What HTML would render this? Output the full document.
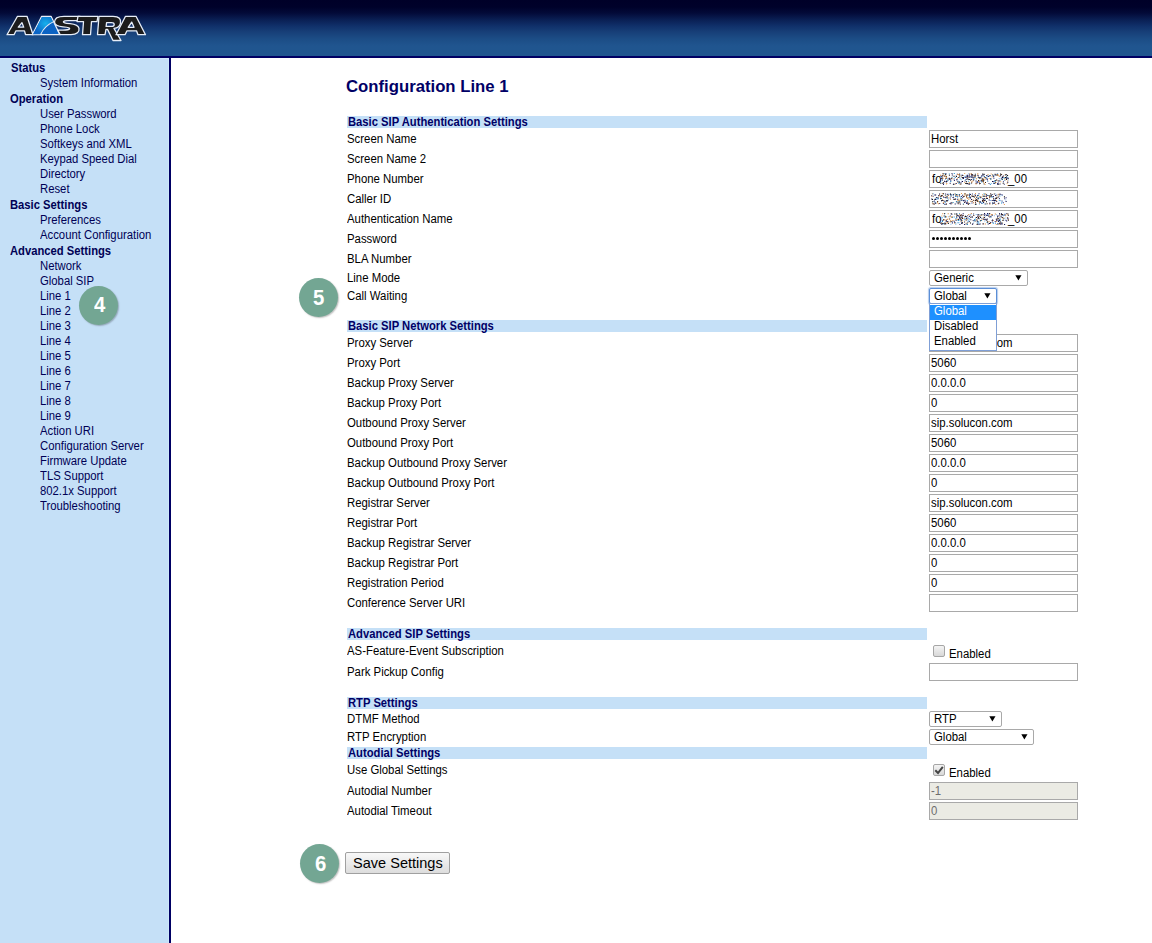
<!DOCTYPE html>
<html><head><meta charset="utf-8"><title>Aastra</title>
<style>
html,body{margin:0;padding:0;width:1152px;height:943px;overflow:hidden;background:#fff;font-family:"Liberation Sans",sans-serif}
.t{position:absolute;white-space:nowrap;transform-origin:0 0}
#hdr{position:absolute;left:0;top:0;width:1152px;height:56px;background:linear-gradient(#000028 0px,#00012a 7px,#030a38 13px,#0a2055 20px,#10306a 26px,#173f78 32px,#1c4d86 39px,#20558f 46px,#20568f 56px)}
#hb{position:absolute;left:0;top:56px;width:1152px;height:2px;background:#000064}
#side{position:absolute;left:0;top:58px;width:169px;height:885px;background:#c5e0f7}
#sl{position:absolute;left:168px;top:58px;width:1px;height:885px;background:#cde8fa}
#st{position:absolute;left:0;top:58px;width:169px;height:1px;background:#cde8fa}
#sb{position:absolute;left:169px;top:56px;width:2px;height:887px;background:#000064}
</style></head><body>
<div id="hdr"></div><div id="hb"></div><div id="side"></div><div id="sl"></div><div id="st"></div><div id="sb"></div>
<svg style="position:absolute;left:0;top:0" width="160" height="56" viewBox="0 0 160 56">
<defs><radialGradient id="bl" cx="0.62" cy="0.38" r="0.6"><stop offset="0" stop-color="#16b0ec"/><stop offset="1" stop-color="#0a64c6"/></radialGradient></defs>
<g transform="translate(0,16.3) scale(1,0.968) translate(0,-16)"><g stroke="#e8eef8" stroke-width="1.3" stroke-linejoin="round" fill="#1c1c1c">
<path d="M7 35L17.5 16H27L33 35H25.5L24.5 31H16L14 35Z M18.3 27.3H23.7L22 22.5Z" fill-rule="evenodd"/>
<path d="M32.3 35L41.7 16H51L59.9 35Z" fill="#0b63c4"/>
<path d="M80 16H64C57 16 54.5 19 54.5 22C54.5 25 58 26.5 63 27C69 27.5 70 28 69.5 29C69 30 67 30.2 63 30.2H57.8L60.2 35H71C77 35 79.5 32 79 28.5C78.5 25.5 75.5 24 70 23.5C65 23 63 22.5 63.5 21.5C64 20.5 66 20.4 68 20.4H79Z"/>
<path d="M78 16H98L97 21.5H91.5L90.5 35H82.5L83.5 21.5H77Z"/>
<path d="M99 16H113C119.5 16 121 19 120.5 23C120 26 117.5 28 114 28.5L121 41H113L107.5 29.5H106L105 35H97.5Z M106.6 22.5L106.1 26.5H111.5C113.5 26.5 114.2 25.3 114.2 24.4C114.2 23.2 113.2 22.5 111.5 22.5Z" fill-rule="evenodd"/>
<path d="M116 35L125.5 16H136L145.5 35H138L136.5 31H127L125 35Z M128.2 27.4H134L131.7 22Z" fill-rule="evenodd"/>
</g>
<path d="M33 34.6L41.9 16.6H50.6L53.3 22.2C47.5 24.5 43 29 40.5 34.6Z" fill="url(#bl)"/><path d="M40.5 35C43 29 47.5 24.5 53.6 21.5" stroke="#e0e8f4" stroke-width="1.1" fill="none"/></g>
</svg>
<div class="t" style="left:10.6px;top:61px;font-size:12px;line-height:14px;font-weight:bold;color:#000055;transform:scaleX(0.936);">Status</div>
<div class="t" style="left:39.9px;top:76px;font-size:12px;line-height:14px;font-weight:normal;color:#000055;transform:scaleX(0.942);">System Information</div>
<div class="t" style="left:9.6px;top:92px;font-size:12px;line-height:14px;font-weight:bold;color:#000055;transform:scaleX(0.936);">Operation</div>
<div class="t" style="left:39.9px;top:107px;font-size:12px;line-height:14px;font-weight:normal;color:#000055;transform:scaleX(0.942);">User Password</div>
<div class="t" style="left:39.9px;top:122px;font-size:12px;line-height:14px;font-weight:normal;color:#000055;transform:scaleX(0.942);">Phone Lock</div>
<div class="t" style="left:39.9px;top:137px;font-size:12px;line-height:14px;font-weight:normal;color:#000055;transform:scaleX(0.942);">Softkeys and XML</div>
<div class="t" style="left:39.9px;top:152px;font-size:12px;line-height:14px;font-weight:normal;color:#000055;transform:scaleX(0.942);">Keypad Speed Dial</div>
<div class="t" style="left:39.9px;top:167px;font-size:12px;line-height:14px;font-weight:normal;color:#000055;transform:scaleX(0.942);">Directory</div>
<div class="t" style="left:39.9px;top:182px;font-size:12px;line-height:14px;font-weight:normal;color:#000055;transform:scaleX(0.942);">Reset</div>
<div class="t" style="left:10.1px;top:198px;font-size:12px;line-height:14px;font-weight:bold;color:#000055;transform:scaleX(0.936);">Basic Settings</div>
<div class="t" style="left:39.9px;top:213px;font-size:12px;line-height:14px;font-weight:normal;color:#000055;transform:scaleX(0.942);">Preferences</div>
<div class="t" style="left:39.9px;top:228px;font-size:12px;line-height:14px;font-weight:normal;color:#000055;transform:scaleX(0.942);">Account Configuration</div>
<div class="t" style="left:9.6px;top:244px;font-size:12px;line-height:14px;font-weight:bold;color:#000055;transform:scaleX(0.936);">Advanced Settings</div>
<div class="t" style="left:39.9px;top:259px;font-size:12px;line-height:14px;font-weight:normal;color:#000055;transform:scaleX(0.942);">Network</div>
<div class="t" style="left:39.9px;top:274px;font-size:12px;line-height:14px;font-weight:normal;color:#000055;transform:scaleX(0.942);">Global SIP</div>
<div class="t" style="left:39.9px;top:289px;font-size:12px;line-height:14px;font-weight:normal;color:#000055;transform:scaleX(0.942);">Line 1</div>
<div class="t" style="left:39.9px;top:304px;font-size:12px;line-height:14px;font-weight:normal;color:#000055;transform:scaleX(0.942);">Line 2</div>
<div class="t" style="left:39.9px;top:319px;font-size:12px;line-height:14px;font-weight:normal;color:#000055;transform:scaleX(0.942);">Line 3</div>
<div class="t" style="left:39.9px;top:334px;font-size:12px;line-height:14px;font-weight:normal;color:#000055;transform:scaleX(0.942);">Line 4</div>
<div class="t" style="left:39.9px;top:349px;font-size:12px;line-height:14px;font-weight:normal;color:#000055;transform:scaleX(0.942);">Line 5</div>
<div class="t" style="left:39.9px;top:364px;font-size:12px;line-height:14px;font-weight:normal;color:#000055;transform:scaleX(0.942);">Line 6</div>
<div class="t" style="left:39.9px;top:379px;font-size:12px;line-height:14px;font-weight:normal;color:#000055;transform:scaleX(0.942);">Line 7</div>
<div class="t" style="left:39.9px;top:394px;font-size:12px;line-height:14px;font-weight:normal;color:#000055;transform:scaleX(0.942);">Line 8</div>
<div class="t" style="left:39.9px;top:409px;font-size:12px;line-height:14px;font-weight:normal;color:#000055;transform:scaleX(0.942);">Line 9</div>
<div class="t" style="left:39.9px;top:424px;font-size:12px;line-height:14px;font-weight:normal;color:#000055;transform:scaleX(0.942);">Action URI</div>
<div class="t" style="left:39.9px;top:439px;font-size:12px;line-height:14px;font-weight:normal;color:#000055;transform:scaleX(0.942);">Configuration Server</div>
<div class="t" style="left:39.9px;top:454px;font-size:12px;line-height:14px;font-weight:normal;color:#000055;transform:scaleX(0.942);">Firmware Update</div>
<div class="t" style="left:39.9px;top:469px;font-size:12px;line-height:14px;font-weight:normal;color:#000055;transform:scaleX(0.942);">TLS Support</div>
<div class="t" style="left:39.9px;top:484px;font-size:12px;line-height:14px;font-weight:normal;color:#000055;transform:scaleX(0.942);">802.1x Support</div>
<div class="t" style="left:39.9px;top:499px;font-size:12px;line-height:14px;font-weight:normal;color:#000055;transform:scaleX(0.942);">Troubleshooting</div>
<div class="t" style="left:346px;top:78px;font-size:16px;line-height:18px;font-weight:bold;color:#000066;transform:scaleX(1.045);">Configuration Line 1</div>
<div style="position:absolute;left:347px;top:116px;width:580px;height:12px;background:#c5e0f7"></div>
<div class="t" style="left:348px;top:115px;font-size:12px;line-height:14px;font-weight:bold;color:#000066;transform:scaleX(0.936);">Basic SIP Authentication Settings</div>
<div class="t" style="left:346.8px;top:132px;font-size:12px;line-height:14px;font-weight:normal;color:#000;transform:scaleX(0.948);">Screen Name</div>
<div style="position:absolute;left:929px;top:130px;width:147px;height:16px;border:1px solid #a9a9a9;background:#fff"></div>
<div class="t" style="left:931px;top:132px;font-size:12px;line-height:14px;font-weight:normal;color:#000;transform:scaleX(0.948);">Horst</div>
<div class="t" style="left:346.8px;top:152px;font-size:12px;line-height:14px;font-weight:normal;color:#000;transform:scaleX(0.948);">Screen Name 2</div>
<div style="position:absolute;left:929px;top:150px;width:147px;height:16px;border:1px solid #a9a9a9;background:#fff"></div>
<div class="t" style="left:346.8px;top:172px;font-size:12px;line-height:14px;font-weight:normal;color:#000;transform:scaleX(0.948);">Phone Number</div>
<div style="position:absolute;left:929px;top:170px;width:147px;height:16px;border:1px solid #a9a9a9;background:#fff"></div>
<div class="t" style="left:346.8px;top:192px;font-size:12px;line-height:14px;font-weight:normal;color:#000;transform:scaleX(0.948);">Caller ID</div>
<div style="position:absolute;left:929px;top:190px;width:147px;height:16px;border:1px solid #a9a9a9;background:#fff"></div>
<div class="t" style="left:346.8px;top:212px;font-size:12px;line-height:14px;font-weight:normal;color:#000;transform:scaleX(0.948);">Authentication Name</div>
<div style="position:absolute;left:929px;top:210px;width:147px;height:16px;border:1px solid #a9a9a9;background:#fff"></div>
<div class="t" style="left:346.8px;top:232px;font-size:12px;line-height:14px;font-weight:normal;color:#000;transform:scaleX(0.948);">Password</div>
<div style="position:absolute;left:929px;top:230px;width:147px;height:16px;border:1px solid #a9a9a9;background:#fff"></div>
<div class="t" style="left:346.8px;top:252px;font-size:12px;line-height:14px;font-weight:normal;color:#000;transform:scaleX(0.948);">BLA Number</div>
<div style="position:absolute;left:929px;top:250px;width:147px;height:16px;border:1px solid #a9a9a9;background:#fff"></div>
<div class="t" style="left:931.5px;top:172px;font-size:12px;line-height:14px;font-weight:normal;color:#000;transform:scaleX(0.948);">fo</div>
<svg style="position:absolute;left:940px;top:173px" width="69" height="12"><path fill="#1a1a6a" d="M22.0 1.7h1v1h-1zM16.4 6.1h1v1h-1zM42.9 6.4h1v1h-1zM6.6 7.8h1v1h-1zM10.3 5.4h1v1h-1zM10.3 7.2h1v1h-1zM47.0 5.7h1v1h-1zM24.6 7.6h1v1h-1zM13.6 5.4h1v1h-1zM13.9 6.9h1v1h-1zM37.0 9.2h1v1h-1zM21.7 7.9h1v1h-1zM23.0 5.0h1v1h-1zM28.9 0.8h1v1h-1zM27.5 3.8h1v1h-1zM40.7 7.6h1v1h-1zM38.7 8.9h1v1h-1zM46.3 5.4h1v1h-1zM61.9 3.2h1v1h-1zM62.9 8.3h1v1h-1zM53.4 4.7h1v1h-1zM37.3 7.9h1v1h-1zM43.8 3.1h1v1h-1zM25.6 3.7h1v1h-1zM57.7 9.6h1v1h-1zM5.8 8.5h1v1h-1zM53.2 2.6h1v1h-1zM26.4 2.5h1v1h-1zM62.9 2.5h1v1h-1zM61.0 5.3h1v1h-1zM24.7 3.7h1v1h-1zM9.0 5.5h1v1h-1zM16.8 0.7h1v1h-1zM57.2 10.1h1v1h-1zM59.6 2.6h1v1h-1zM30.5 2.9h1v1h-1zM3.0 11.0h1v1h-1zM45.4 4.6h1v1h-1zM20.5 9.2h1v1h-1z"/><path fill="#d08030" d="M2.5 4.8h1v1h-1zM38.1 7.5h1v1h-1zM19.6 10.8h1v1h-1zM39.4 5.0h1v1h-1zM64.2 5.2h1v1h-1zM26.7 4.4h1v1h-1zM7.5 6.6h1v1h-1zM0.0 1.7h1v1h-1zM64.5 6.8h1v1h-1zM51.6 3.3h1v1h-1zM32.6 7.2h1v1h-1zM31.5 8.2h1v1h-1zM37.3 0.2h1v1h-1zM11.7 5.2h1v1h-1zM36.1 5.3h1v1h-1zM30.7 0.3h1v1h-1zM57.1 1.5h1v1h-1zM38.8 7.7h1v1h-1zM43.1 8.8h1v1h-1zM16.9 8.5h1v1h-1zM42.0 7.1h1v1h-1zM4.1 3.0h1v1h-1zM28.3 4.1h1v1h-1zM6.2 3.8h1v1h-1zM65.8 5.4h1v1h-1zM47.5 1.2h1v1h-1zM5.5 4.6h1v1h-1zM2.8 0.4h1v1h-1zM62.8 3.3h1v1h-1zM31.3 8.6h1v1h-1zM66.7 9.7h1v1h-1zM18.0 0.9h1v1h-1zM57.6 7.3h1v1h-1zM34.5 2.5h1v1h-1zM44.4 10.9h1v1h-1zM37.3 0.7h1v1h-1zM43.6 10.0h1v1h-1zM35.4 10.2h1v1h-1z"/><path fill="#2090d0" d="M24.6 2.7h1v1h-1zM1.5 5.1h1v1h-1zM65.1 1.7h1v1h-1zM25.1 6.2h1v1h-1zM4.6 2.3h1v1h-1zM59.5 6.8h1v1h-1zM50.3 5.3h1v1h-1zM49.3 1.9h1v1h-1zM1.3 4.8h1v1h-1zM41.4 8.5h1v1h-1zM53.3 9.9h1v1h-1zM18.5 10.0h1v1h-1zM19.0 8.8h1v1h-1zM19.7 5.5h1v1h-1zM66.8 3.8h1v1h-1zM10.2 8.0h1v1h-1zM46.3 4.5h1v1h-1zM63.5 4.5h1v1h-1zM62.0 6.1h1v1h-1zM37.9 4.3h1v1h-1zM53.3 2.5h1v1h-1zM43.9 3.3h1v1h-1zM7.4 6.9h1v1h-1zM3.7 0.3h1v1h-1zM28.2 7.8h1v1h-1zM49.8 11.0h1v1h-1zM54.6 8.1h1v1h-1zM34.8 4.3h1v1h-1zM32.8 6.0h1v1h-1zM63.3 4.1h1v1h-1zM14.8 4.1h1v1h-1zM54.1 7.3h1v1h-1zM43.5 1.0h1v1h-1zM13.8 0.1h1v1h-1zM39.3 4.0h1v1h-1zM8.8 0.6h1v1h-1zM11.7 3.8h1v1h-1z"/><path fill="#000" d="M39.6 10.0h1v1h-1zM56.2 1.4h1v1h-1zM39.2 4.4h1v1h-1zM41.5 5.4h1v1h-1zM52.2 1.4h1v1h-1zM32.7 4.4h1v1h-1zM61.8 3.9h1v1h-1zM43.3 6.7h1v1h-1zM54.8 9.0h1v1h-1zM64.9 4.0h1v1h-1zM67.1 2.1h1v1h-1zM60.1 0.6h1v1h-1zM62.7 9.8h1v1h-1zM26.7 3.5h1v1h-1zM60.2 1.8h1v1h-1zM34.8 0.7h1v1h-1zM42.3 0.5h1v1h-1zM42.7 5.8h1v1h-1zM66.0 3.4h1v1h-1zM66.1 6.0h1v1h-1zM2.3 9.7h1v1h-1zM5.7 3.1h1v1h-1zM56.2 6.4h1v1h-1zM55.0 9.3h1v1h-1zM26.3 10.1h1v1h-1zM57.1 1.3h1v1h-1zM61.6 5.5h1v1h-1zM29.1 6.0h1v1h-1zM21.7 4.1h1v1h-1zM26.0 8.2h1v1h-1zM8.6 5.5h1v1h-1zM58.2 10.7h1v1h-1zM20.4 10.4h1v1h-1zM18.9 3.5h1v1h-1zM32.3 2.6h1v1h-1zM50.3 5.6h1v1h-1zM33.7 2.2h1v1h-1zM6.0 7.8h1v1h-1zM25.3 10.1h1v1h-1zM54.6 0.7h1v1h-1zM13.5 2.7h1v1h-1zM16.0 3.1h1v1h-1zM22.2 4.4h1v1h-1zM0.3 9.7h1v1h-1zM12.9 10.7h1v1h-1zM40.8 7.2h1v1h-1zM26.1 8.3h1v1h-1z"/><path fill="#303060" d="M3.2 9.4h1v1h-1zM28.5 5.9h1v1h-1zM47.5 2.7h1v1h-1zM33.0 6.5h1v1h-1zM16.4 6.5h1v1h-1zM41.2 2.2h1v1h-1zM59.6 10.4h1v1h-1zM29.1 2.3h1v1h-1zM26.1 5.7h1v1h-1zM66.1 1.2h1v1h-1zM57.8 7.4h1v1h-1zM41.4 2.4h1v1h-1zM67.6 4.6h1v1h-1zM63.8 10.7h1v1h-1zM3.4 2.2h1v1h-1zM18.4 8.8h1v1h-1zM56.9 0.2h1v1h-1zM59.2 7.4h1v1h-1zM39.9 4.3h1v1h-1zM4.5 8.1h1v1h-1zM40.8 3.6h1v1h-1zM47.1 7.4h1v1h-1zM65.8 4.9h1v1h-1zM48.5 9.9h1v1h-1zM19.1 0.6h1v1h-1zM43.2 1.6h1v1h-1zM32.1 3.8h1v1h-1zM17.4 8.1h1v1h-1zM27.2 4.9h1v1h-1zM2.0 4.5h1v1h-1zM46.4 2.2h1v1h-1zM15.7 2.4h1v1h-1zM11.5 0.0h1v1h-1zM53.0 3.2h1v1h-1zM38.5 4.1h1v1h-1zM46.1 2.0h1v1h-1zM27.0 3.0h1v1h-1z"/><path fill="#80b8e8" d="M4.9 5.9h1v1h-1zM39.5 7.0h1v1h-1zM34.8 1.8h1v1h-1zM39.0 9.6h1v1h-1zM19.4 4.2h1v1h-1zM43.1 10.5h1v1h-1zM21.2 1.6h1v1h-1zM47.3 2.9h1v1h-1zM36.2 8.6h1v1h-1zM17.6 7.6h1v1h-1zM30.4 10.3h1v1h-1zM6.9 5.2h1v1h-1zM60.5 4.8h1v1h-1zM63.9 7.1h1v1h-1zM27.5 4.6h1v1h-1zM58.7 5.0h1v1h-1zM0.2 4.0h1v1h-1zM5.8 0.5h1v1h-1zM19.0 1.2h1v1h-1zM57.1 0.0h1v1h-1zM67.9 6.5h1v1h-1zM29.7 3.5h1v1h-1zM33.9 6.3h1v1h-1zM47.3 7.9h1v1h-1zM26.7 9.9h1v1h-1zM50.8 9.9h1v1h-1zM17.8 7.9h1v1h-1zM41.3 3.6h1v1h-1zM7.2 6.6h1v1h-1zM21.2 6.2h1v1h-1zM28.2 0.2h1v1h-1z"/><path fill="#e8a050" d="M18.9 1.5h1v1h-1zM58.8 3.1h1v1h-1zM67.1 7.5h1v1h-1zM56.8 1.3h1v1h-1zM5.9 10.4h1v1h-1zM35.8 10.3h1v1h-1zM14.9 10.5h1v1h-1zM18.4 1.4h1v1h-1zM16.7 4.9h1v1h-1zM44.6 6.0h1v1h-1zM29.3 0.6h1v1h-1zM24.2 0.0h1v1h-1zM18.0 1.0h1v1h-1zM58.0 1.7h1v1h-1zM17.2 0.7h1v1h-1zM60.3 8.2h1v1h-1zM6.3 9.9h1v1h-1zM42.6 5.8h1v1h-1zM3.8 2.1h1v1h-1zM5.5 2.5h1v1h-1zM64.5 1.6h1v1h-1zM50.7 0.4h1v1h-1zM38.2 8.3h1v1h-1zM24.3 9.0h1v1h-1zM2.1 4.5h1v1h-1zM48.7 5.1h1v1h-1zM55.4 9.0h1v1h-1zM43.8 4.3h1v1h-1zM28.8 9.0h1v1h-1z"/><path fill="#000040" d="M29.1 3.5h1v1h-1zM35.7 9.6h1v1h-1zM23.1 3.9h1v1h-1zM4.1 7.7h1v1h-1zM27.1 10.1h1v1h-1zM32.2 1.3h1v1h-1zM67.5 5.1h1v1h-1zM67.3 8.7h1v1h-1zM53.2 8.3h1v1h-1zM1.9 6.5h1v1h-1zM54.8 1.6h1v1h-1zM61.9 3.9h1v1h-1zM30.8 5.9h1v1h-1zM9.7 9.7h1v1h-1zM37.5 2.1h1v1h-1zM31.2 1.7h1v1h-1zM52.0 7.9h1v1h-1zM65.2 4.1h1v1h-1zM49.6 2.3h1v1h-1zM33.6 4.2h1v1h-1zM42.2 1.5h1v1h-1zM48.2 3.1h1v1h-1zM13.5 10.8h1v1h-1zM15.7 9.9h1v1h-1zM26.8 1.7h1v1h-1zM27.6 2.6h1v1h-1zM30.8 3.7h1v1h-1zM8.7 4.7h1v1h-1zM35.5 7.5h1v1h-1zM0.7 3.3h1v1h-1zM57.1 10.8h1v1h-1zM22.0 8.1h1v1h-1zM1.6 2.6h1v1h-1zM53.7 10.0h1v1h-1zM28.6 10.9h1v1h-1zM11.8 1.5h1v1h-1zM5.3 0.3h1v1h-1z"/><path fill="#402010" d="M42.1 5.5h1v1h-1zM65.4 0.9h1v1h-1zM5.5 4.9h1v1h-1zM19.2 1.6h1v1h-1zM31.1 9.6h1v1h-1zM35.1 2.3h1v1h-1zM44.7 3.9h1v1h-1zM1.9 2.3h1v1h-1zM45.0 9.0h1v1h-1zM28.6 10.1h1v1h-1zM8.9 1.7h1v1h-1zM37.8 3.6h1v1h-1zM18.8 8.5h1v1h-1zM30.1 6.7h1v1h-1zM34.5 2.7h1v1h-1zM11.0 4.7h1v1h-1zM27.6 5.9h1v1h-1zM2.5 0.2h1v1h-1zM20.7 2.6h1v1h-1zM3.0 9.2h1v1h-1zM42.7 8.1h1v1h-1zM9.5 5.8h1v1h-1zM38.0 6.9h1v1h-1zM31.1 0.8h1v1h-1zM61.1 1.0h1v1h-1zM31.7 1.3h1v1h-1zM1.2 5.0h1v1h-1zM5.1 1.0h1v1h-1zM17.8 4.0h1v1h-1zM55.2 6.9h1v1h-1zM43.7 0.8h1v1h-1zM26.6 10.2h1v1h-1zM22.4 2.0h1v1h-1zM42.2 7.4h1v1h-1zM39.0 10.2h1v1h-1z"/></svg>
<div class="t" style="left:1008px;top:172px;font-size:12px;line-height:14px;font-weight:normal;color:#000;transform:scaleX(0.948);">_00</div>
<svg style="position:absolute;left:931px;top:193px" width="76" height="12"><path fill="#1a1a6a" d="M73.2 5.3h1v1h-1zM3.1 6.2h1v1h-1zM37.8 2.0h1v1h-1zM49.0 8.6h1v1h-1zM13.3 8.2h1v1h-1zM31.3 4.0h1v1h-1zM9.9 2.5h1v1h-1zM30.1 2.9h1v1h-1zM55.0 2.7h1v1h-1zM38.1 0.7h1v1h-1zM35.2 9.2h1v1h-1zM63.9 6.8h1v1h-1zM58.0 3.8h1v1h-1zM0.1 2.2h1v1h-1zM70.8 1.4h1v1h-1zM15.5 4.3h1v1h-1zM63.7 5.3h1v1h-1zM67.1 3.6h1v1h-1zM47.5 0.2h1v1h-1zM40.5 9.5h1v1h-1zM13.5 4.0h1v1h-1zM36.4 9.9h1v1h-1zM25.6 2.8h1v1h-1zM44.0 7.0h1v1h-1zM13.9 0.4h1v1h-1zM32.3 7.1h1v1h-1zM47.0 4.7h1v1h-1zM33.8 8.2h1v1h-1zM68.5 0.6h1v1h-1zM71.8 9.2h1v1h-1zM65.2 8.0h1v1h-1zM60.6 3.1h1v1h-1zM44.0 9.0h1v1h-1zM59.1 1.7h1v1h-1zM25.9 5.7h1v1h-1zM74.6 4.2h1v1h-1zM4.4 6.1h1v1h-1zM4.2 1.6h1v1h-1zM33.1 8.9h1v1h-1zM35.1 10.0h1v1h-1zM21.5 4.0h1v1h-1zM51.9 5.7h1v1h-1zM2.8 7.7h1v1h-1zM58.4 9.5h1v1h-1zM23.4 6.1h1v1h-1zM2.7 10.7h1v1h-1zM61.1 9.3h1v1h-1zM18.7 4.6h1v1h-1zM24.3 2.2h1v1h-1zM58.2 10.3h1v1h-1z"/><path fill="#d08030" d="M45.6 7.0h1v1h-1zM64.3 11.0h1v1h-1zM41.6 6.4h1v1h-1zM53.1 5.0h1v1h-1zM13.9 1.8h1v1h-1zM10.8 0.3h1v1h-1zM51.9 7.0h1v1h-1zM8.0 2.3h1v1h-1zM2.5 10.4h1v1h-1zM40.3 2.4h1v1h-1zM37.4 1.2h1v1h-1zM7.1 10.2h1v1h-1zM24.6 2.1h1v1h-1zM32.4 2.9h1v1h-1zM29.2 5.4h1v1h-1zM34.7 1.8h1v1h-1zM36.0 4.7h1v1h-1zM59.4 1.8h1v1h-1zM5.9 9.2h1v1h-1zM31.9 11.0h1v1h-1zM47.0 7.7h1v1h-1zM65.2 4.6h1v1h-1zM37.3 5.7h1v1h-1zM35.7 4.5h1v1h-1zM51.3 1.3h1v1h-1zM0.9 0.2h1v1h-1zM35.2 1.8h1v1h-1zM36.5 9.3h1v1h-1zM64.7 7.0h1v1h-1zM44.2 4.9h1v1h-1zM11.8 9.2h1v1h-1zM42.0 9.2h1v1h-1zM53.4 2.2h1v1h-1zM43.7 2.2h1v1h-1zM10.1 2.7h1v1h-1zM16.8 2.0h1v1h-1zM39.2 7.7h1v1h-1zM43.9 8.4h1v1h-1zM27.3 5.8h1v1h-1z"/><path fill="#2090d0" d="M67.8 6.8h1v1h-1zM38.3 0.4h1v1h-1zM21.6 8.9h1v1h-1zM23.9 0.4h1v1h-1zM51.0 9.8h1v1h-1zM16.8 6.4h1v1h-1zM48.6 4.6h1v1h-1zM6.4 5.6h1v1h-1zM29.4 6.4h1v1h-1zM46.6 1.8h1v1h-1zM52.6 0.3h1v1h-1zM26.1 3.6h1v1h-1zM38.1 2.9h1v1h-1zM46.6 4.5h1v1h-1zM2.9 6.0h1v1h-1zM48.2 7.9h1v1h-1zM18.8 1.1h1v1h-1zM4.4 5.1h1v1h-1zM52.5 2.7h1v1h-1zM16.0 4.6h1v1h-1zM14.4 7.8h1v1h-1zM68.2 6.7h1v1h-1zM46.9 1.9h1v1h-1zM44.5 10.9h1v1h-1zM6.2 5.2h1v1h-1zM27.4 8.2h1v1h-1zM29.2 3.4h1v1h-1zM24.1 2.9h1v1h-1zM21.6 1.5h1v1h-1zM14.2 2.1h1v1h-1zM30.2 5.7h1v1h-1zM31.9 10.4h1v1h-1zM29.5 4.9h1v1h-1zM9.3 5.3h1v1h-1zM70.0 9.5h1v1h-1zM35.8 6.9h1v1h-1zM24.9 8.1h1v1h-1zM53.5 6.1h1v1h-1zM42.8 3.3h1v1h-1zM60.5 3.7h1v1h-1zM68.4 2.4h1v1h-1zM57.1 1.9h1v1h-1zM26.3 1.0h1v1h-1zM9.2 4.5h1v1h-1z"/><path fill="#000" d="M9.2 2.7h1v1h-1zM48.7 3.4h1v1h-1zM46.4 5.4h1v1h-1zM51.5 7.9h1v1h-1zM37.7 10.1h1v1h-1zM44.4 6.8h1v1h-1zM24.8 0.9h1v1h-1zM55.0 8.2h1v1h-1zM11.9 0.2h1v1h-1zM0.9 6.1h1v1h-1zM72.9 3.3h1v1h-1zM19.5 2.6h1v1h-1zM14.4 4.3h1v1h-1zM64.3 4.8h1v1h-1zM42.8 3.4h1v1h-1zM35.8 1.5h1v1h-1zM61.1 10.3h1v1h-1zM37.6 4.2h1v1h-1zM51.7 2.8h1v1h-1zM9.5 5.1h1v1h-1zM45.2 3.8h1v1h-1zM12.3 7.2h1v1h-1zM55.0 4.8h1v1h-1zM63.4 7.3h1v1h-1zM53.7 10.5h1v1h-1zM41.6 2.9h1v1h-1zM65.5 3.8h1v1h-1zM1.3 7.9h1v1h-1zM43.9 10.7h1v1h-1zM28.3 7.5h1v1h-1zM59.8 2.2h1v1h-1zM24.1 5.6h1v1h-1zM19.0 0.4h1v1h-1zM27.8 2.6h1v1h-1zM72.9 3.5h1v1h-1zM4.3 9.8h1v1h-1zM32.4 2.9h1v1h-1zM10.4 2.0h1v1h-1zM45.9 7.8h1v1h-1zM10.0 7.3h1v1h-1zM5.4 3.9h1v1h-1zM1.5 10.2h1v1h-1zM40.6 2.5h1v1h-1zM58.3 3.7h1v1h-1z"/><path fill="#303060" d="M45.0 6.1h1v1h-1zM4.9 3.9h1v1h-1zM11.9 9.9h1v1h-1zM67.9 5.0h1v1h-1zM30.3 7.0h1v1h-1zM22.2 5.7h1v1h-1zM47.9 9.6h1v1h-1zM13.2 11.0h1v1h-1zM66.8 10.2h1v1h-1zM61.9 6.9h1v1h-1zM22.1 3.7h1v1h-1zM1.6 2.8h1v1h-1zM19.5 10.4h1v1h-1zM28.8 10.8h1v1h-1zM8.2 10.0h1v1h-1zM52.0 5.5h1v1h-1zM53.5 6.9h1v1h-1zM43.5 1.2h1v1h-1zM26.6 9.4h1v1h-1zM50.9 5.3h1v1h-1zM49.4 4.0h1v1h-1zM15.7 0.8h1v1h-1zM50.1 9.8h1v1h-1zM30.3 5.5h1v1h-1zM40.9 0.5h1v1h-1zM65.4 1.5h1v1h-1zM42.2 2.8h1v1h-1zM53.2 5.1h1v1h-1zM62.3 6.6h1v1h-1zM34.9 2.3h1v1h-1zM44.0 2.3h1v1h-1zM70.5 7.4h1v1h-1zM30.9 1.7h1v1h-1zM69.4 1.1h1v1h-1zM31.2 1.8h1v1h-1zM38.9 3.8h1v1h-1z"/><path fill="#80b8e8" d="M70.4 1.7h1v1h-1zM74.3 6.4h1v1h-1zM47.9 10.8h1v1h-1zM1.7 0.0h1v1h-1zM4.2 9.0h1v1h-1zM17.4 0.4h1v1h-1zM70.9 8.2h1v1h-1zM55.3 0.7h1v1h-1zM3.6 8.4h1v1h-1zM59.0 6.9h1v1h-1zM31.7 7.1h1v1h-1zM54.3 10.7h1v1h-1zM1.2 8.7h1v1h-1zM38.5 10.3h1v1h-1zM68.7 6.9h1v1h-1zM26.8 7.2h1v1h-1zM64.1 0.6h1v1h-1zM58.8 1.5h1v1h-1zM49.9 9.2h1v1h-1zM1.5 0.5h1v1h-1zM25.4 9.5h1v1h-1zM49.1 8.7h1v1h-1zM68.6 7.2h1v1h-1zM70.9 8.6h1v1h-1zM21.9 0.7h1v1h-1zM51.3 10.1h1v1h-1zM34.5 1.0h1v1h-1zM60.4 3.2h1v1h-1zM53.0 1.0h1v1h-1zM12.9 10.4h1v1h-1zM19.3 2.2h1v1h-1zM14.0 9.1h1v1h-1zM61.2 9.5h1v1h-1zM62.9 7.9h1v1h-1zM24.4 1.6h1v1h-1z"/><path fill="#e8a050" d="M48.0 9.4h1v1h-1zM13.7 2.4h1v1h-1zM50.1 3.6h1v1h-1zM62.7 8.9h1v1h-1zM8.0 1.4h1v1h-1zM6.0 8.3h1v1h-1zM18.9 5.9h1v1h-1zM55.3 4.1h1v1h-1zM11.2 6.8h1v1h-1zM3.3 5.8h1v1h-1zM53.7 0.1h1v1h-1zM66.8 0.7h1v1h-1zM43.1 3.2h1v1h-1zM0.9 9.4h1v1h-1zM34.7 1.6h1v1h-1zM0.4 2.7h1v1h-1zM52.6 6.5h1v1h-1zM67.1 2.7h1v1h-1zM15.8 7.5h1v1h-1zM47.8 2.8h1v1h-1zM30.0 0.1h1v1h-1zM72.9 10.9h1v1h-1zM26.5 7.0h1v1h-1zM52.8 7.6h1v1h-1zM26.0 1.7h1v1h-1zM57.8 2.3h1v1h-1zM29.9 6.1h1v1h-1zM58.0 4.6h1v1h-1zM33.5 0.2h1v1h-1zM27.2 7.1h1v1h-1zM23.2 0.6h1v1h-1zM44.0 0.1h1v1h-1zM35.3 4.1h1v1h-1zM58.4 10.5h1v1h-1zM32.9 1.6h1v1h-1zM11.0 6.3h1v1h-1zM12.3 9.1h1v1h-1zM16.9 4.6h1v1h-1z"/><path fill="#000040" d="M46.1 2.2h1v1h-1zM31.9 7.2h1v1h-1zM33.5 6.8h1v1h-1zM14.5 10.8h1v1h-1zM3.6 9.4h1v1h-1zM15.3 6.9h1v1h-1zM74.6 8.0h1v1h-1zM55.9 5.1h1v1h-1zM57.7 6.6h1v1h-1zM0.3 5.4h1v1h-1zM52.1 9.1h1v1h-1zM55.6 1.9h1v1h-1zM51.0 7.1h1v1h-1zM38.9 1.1h1v1h-1zM39.1 4.5h1v1h-1zM60.7 7.0h1v1h-1zM48.7 8.6h1v1h-1zM64.1 2.0h1v1h-1zM12.0 3.5h1v1h-1zM60.6 1.0h1v1h-1zM62.0 3.2h1v1h-1zM8.1 0.5h1v1h-1zM15.9 7.3h1v1h-1zM16.4 1.3h1v1h-1zM23.7 10.4h1v1h-1zM35.8 8.6h1v1h-1zM40.1 5.9h1v1h-1zM18.5 10.1h1v1h-1zM28.1 1.2h1v1h-1zM7.1 2.3h1v1h-1zM3.8 6.1h1v1h-1zM53.2 7.1h1v1h-1zM63.2 6.9h1v1h-1zM19.6 1.2h1v1h-1zM10.8 7.0h1v1h-1zM62.2 9.8h1v1h-1zM63.1 9.5h1v1h-1zM6.8 4.5h1v1h-1zM21.9 1.2h1v1h-1zM19.6 9.2h1v1h-1zM3.4 1.4h1v1h-1z"/><path fill="#402010" d="M27.4 8.8h1v1h-1zM6.2 8.1h1v1h-1zM59.4 2.9h1v1h-1zM22.8 5.8h1v1h-1zM44.6 6.4h1v1h-1zM10.7 2.2h1v1h-1zM53.4 2.9h1v1h-1zM50.9 7.5h1v1h-1zM28.5 9.4h1v1h-1zM14.9 10.5h1v1h-1zM59.2 0.3h1v1h-1zM44.4 10.5h1v1h-1zM36.8 10.9h1v1h-1zM15.5 2.9h1v1h-1zM65.1 5.0h1v1h-1zM40.6 7.9h1v1h-1zM55.6 10.3h1v1h-1zM35.1 3.2h1v1h-1zM14.8 7.6h1v1h-1zM62.0 5.2h1v1h-1zM25.6 8.6h1v1h-1zM45.7 7.2h1v1h-1zM54.7 0.9h1v1h-1zM20.5 9.4h1v1h-1zM57.9 2.6h1v1h-1zM67.3 9.7h1v1h-1zM42.3 7.0h1v1h-1zM62.8 0.5h1v1h-1zM67.7 1.3h1v1h-1zM33.2 8.7h1v1h-1zM26.7 10.3h1v1h-1zM33.5 0.3h1v1h-1zM52.0 6.6h1v1h-1z"/></svg>
<div class="t" style="left:931.5px;top:212px;font-size:12px;line-height:14px;font-weight:normal;color:#000;transform:scaleX(0.948);">fo</div>
<svg style="position:absolute;left:940px;top:213px" width="69" height="12"><path fill="#1a1a6a" d="M55.0 9.7h1v1h-1zM26.1 6.4h1v1h-1zM60.6 10.5h1v1h-1zM24.0 10.9h1v1h-1zM47.0 0.1h1v1h-1zM20.9 7.6h1v1h-1zM56.0 6.7h1v1h-1zM19.3 2.6h1v1h-1zM48.5 0.4h1v1h-1zM45.6 6.3h1v1h-1zM61.3 9.6h1v1h-1zM66.2 7.5h1v1h-1zM37.0 2.7h1v1h-1zM11.4 0.8h1v1h-1zM44.4 0.9h1v1h-1zM57.0 2.8h1v1h-1zM43.3 4.4h1v1h-1zM28.9 3.1h1v1h-1zM65.4 6.8h1v1h-1zM58.8 5.8h1v1h-1zM16.1 4.1h1v1h-1zM54.7 8.1h1v1h-1zM59.4 8.8h1v1h-1zM21.2 1.4h1v1h-1zM16.1 0.2h1v1h-1zM11.9 9.5h1v1h-1zM38.4 10.9h1v1h-1zM64.0 1.5h1v1h-1zM51.4 1.0h1v1h-1zM31.3 3.6h1v1h-1zM57.9 8.1h1v1h-1z"/><path fill="#d08030" d="M54.8 0.4h1v1h-1zM16.1 0.4h1v1h-1zM20.8 7.1h1v1h-1zM39.3 3.0h1v1h-1zM28.4 8.6h1v1h-1zM30.8 0.1h1v1h-1zM47.0 8.2h1v1h-1zM11.6 3.5h1v1h-1zM56.2 5.6h1v1h-1zM12.4 6.9h1v1h-1zM62.4 4.4h1v1h-1zM51.6 1.2h1v1h-1zM11.5 2.9h1v1h-1zM58.4 10.4h1v1h-1zM1.5 9.6h1v1h-1zM59.3 3.7h1v1h-1zM21.1 4.3h1v1h-1zM21.8 7.3h1v1h-1zM11.4 3.8h1v1h-1zM40.0 2.6h1v1h-1zM15.4 6.3h1v1h-1zM50.0 10.0h1v1h-1zM48.6 8.3h1v1h-1zM6.8 6.0h1v1h-1zM7.7 0.2h1v1h-1zM52.7 7.0h1v1h-1zM59.4 10.3h1v1h-1zM44.8 10.6h1v1h-1zM62.6 6.4h1v1h-1zM9.7 8.4h1v1h-1zM7.3 8.1h1v1h-1z"/><path fill="#2090d0" d="M15.3 10.6h1v1h-1zM28.3 7.4h1v1h-1zM18.3 6.9h1v1h-1zM27.0 10.9h1v1h-1zM34.1 7.1h1v1h-1zM3.0 10.2h1v1h-1zM11.8 3.9h1v1h-1zM19.0 0.3h1v1h-1zM18.3 9.2h1v1h-1zM15.5 5.0h1v1h-1zM27.5 5.6h1v1h-1zM2.0 7.9h1v1h-1zM52.7 9.7h1v1h-1zM21.1 7.0h1v1h-1zM29.1 5.6h1v1h-1zM13.7 3.4h1v1h-1zM47.5 1.5h1v1h-1zM37.3 8.4h1v1h-1zM1.7 4.3h1v1h-1zM57.5 10.2h1v1h-1zM50.5 3.6h1v1h-1zM41.0 6.9h1v1h-1zM4.3 0.1h1v1h-1zM38.3 8.5h1v1h-1zM5.0 2.8h1v1h-1zM59.6 6.7h1v1h-1zM24.3 6.3h1v1h-1zM63.2 6.5h1v1h-1zM16.4 0.6h1v1h-1zM34.1 6.1h1v1h-1zM17.6 6.7h1v1h-1zM61.4 9.6h1v1h-1zM59.8 5.5h1v1h-1zM53.0 9.5h1v1h-1zM46.6 8.9h1v1h-1z"/><path fill="#000" d="M31.9 3.4h1v1h-1zM62.8 1.8h1v1h-1zM22.0 9.3h1v1h-1zM39.9 7.3h1v1h-1zM3.7 2.6h1v1h-1zM16.4 1.4h1v1h-1zM37.7 5.1h1v1h-1zM25.6 10.5h1v1h-1zM20.2 5.2h1v1h-1zM40.0 4.0h1v1h-1zM47.2 8.5h1v1h-1zM7.8 10.0h1v1h-1zM67.9 6.8h1v1h-1zM34.6 7.4h1v1h-1zM17.8 6.0h1v1h-1zM57.1 4.5h1v1h-1zM44.0 3.9h1v1h-1zM57.8 5.3h1v1h-1zM17.8 2.5h1v1h-1zM37.0 10.6h1v1h-1zM61.8 1.0h1v1h-1zM2.3 10.0h1v1h-1zM5.2 3.6h1v1h-1zM61.4 1.0h1v1h-1zM24.7 3.1h1v1h-1zM25.0 2.7h1v1h-1zM67.8 1.7h1v1h-1zM58.8 7.1h1v1h-1zM10.7 0.2h1v1h-1zM35.9 3.9h1v1h-1zM30.0 9.5h1v1h-1zM61.7 4.1h1v1h-1zM14.4 0.6h1v1h-1z"/><path fill="#303060" d="M2.3 7.1h1v1h-1zM22.0 3.6h1v1h-1zM19.4 10.9h1v1h-1zM45.9 6.8h1v1h-1zM20.4 5.9h1v1h-1zM11.9 8.5h1v1h-1zM9.8 2.6h1v1h-1zM51.6 2.1h1v1h-1zM61.6 1.1h1v1h-1zM41.4 4.7h1v1h-1zM7.6 8.4h1v1h-1zM33.1 0.5h1v1h-1zM20.7 1.2h1v1h-1zM30.3 6.3h1v1h-1zM5.7 7.9h1v1h-1zM0.6 10.1h1v1h-1zM42.7 10.3h1v1h-1zM6.9 7.9h1v1h-1zM28.8 8.0h1v1h-1zM61.5 1.8h1v1h-1zM49.1 3.6h1v1h-1zM32.7 7.1h1v1h-1zM37.3 1.2h1v1h-1zM44.2 2.1h1v1h-1zM56.9 6.5h1v1h-1zM36.6 7.6h1v1h-1zM18.6 5.5h1v1h-1zM27.5 4.4h1v1h-1zM21.7 1.9h1v1h-1zM37.2 8.3h1v1h-1zM27.2 2.2h1v1h-1zM48.9 0.1h1v1h-1zM51.9 8.5h1v1h-1zM51.6 7.1h1v1h-1zM32.5 10.3h1v1h-1zM64.9 1.5h1v1h-1zM29.6 1.5h1v1h-1zM66.3 0.1h1v1h-1z"/><path fill="#80b8e8" d="M19.6 3.9h1v1h-1zM39.5 1.0h1v1h-1zM26.5 3.9h1v1h-1zM35.7 1.1h1v1h-1zM27.3 8.4h1v1h-1zM44.6 3.2h1v1h-1zM44.2 7.5h1v1h-1zM65.4 4.6h1v1h-1zM63.7 1.9h1v1h-1zM46.2 7.3h1v1h-1zM16.9 9.3h1v1h-1zM53.8 2.3h1v1h-1zM47.0 1.5h1v1h-1zM7.8 3.2h1v1h-1zM30.5 1.2h1v1h-1zM33.2 8.6h1v1h-1zM25.1 6.1h1v1h-1zM35.0 4.6h1v1h-1zM0.3 8.8h1v1h-1zM38.4 4.6h1v1h-1zM47.0 1.6h1v1h-1zM37.7 10.4h1v1h-1zM38.3 10.1h1v1h-1zM11.4 8.2h1v1h-1zM56.1 1.3h1v1h-1zM34.9 5.8h1v1h-1zM49.1 0.5h1v1h-1zM64.5 0.2h1v1h-1zM22.5 5.2h1v1h-1zM20.7 8.4h1v1h-1zM34.6 7.0h1v1h-1zM59.4 7.9h1v1h-1zM4.1 3.7h1v1h-1zM39.8 3.3h1v1h-1zM40.9 0.9h1v1h-1zM36.5 9.6h1v1h-1zM62.8 2.3h1v1h-1zM27.6 7.5h1v1h-1zM59.4 0.3h1v1h-1zM28.2 7.8h1v1h-1zM24.3 4.0h1v1h-1zM10.4 10.8h1v1h-1zM38.0 1.1h1v1h-1zM54.9 10.1h1v1h-1zM16.4 3.9h1v1h-1zM59.3 2.7h1v1h-1z"/><path fill="#e8a050" d="M17.0 5.7h1v1h-1zM8.9 3.2h1v1h-1zM41.5 6.3h1v1h-1zM28.1 1.1h1v1h-1zM26.6 6.1h1v1h-1zM20.7 1.6h1v1h-1zM65.2 2.2h1v1h-1zM56.1 8.0h1v1h-1zM55.8 10.9h1v1h-1zM14.1 9.8h1v1h-1zM67.8 6.3h1v1h-1zM23.7 4.9h1v1h-1zM1.3 2.4h1v1h-1zM66.6 0.7h1v1h-1zM45.9 6.4h1v1h-1zM0.5 9.7h1v1h-1zM10.8 3.9h1v1h-1zM6.2 9.4h1v1h-1zM6.0 3.2h1v1h-1zM48.7 2.8h1v1h-1zM51.0 0.9h1v1h-1zM19.1 1.0h1v1h-1zM7.4 5.4h1v1h-1zM2.8 6.2h1v1h-1zM61.8 9.5h1v1h-1zM36.0 6.2h1v1h-1zM6.9 9.1h1v1h-1zM25.4 6.8h1v1h-1zM20.4 7.8h1v1h-1zM37.7 3.2h1v1h-1zM5.1 6.8h1v1h-1zM49.4 1.6h1v1h-1zM67.1 3.9h1v1h-1zM10.2 6.9h1v1h-1zM43.3 3.8h1v1h-1zM4.1 6.2h1v1h-1zM2.1 0.2h1v1h-1z"/><path fill="#000040" d="M50.3 3.2h1v1h-1zM13.7 7.8h1v1h-1zM60.6 3.3h1v1h-1zM4.5 9.6h1v1h-1zM44.7 5.7h1v1h-1zM55.8 5.7h1v1h-1zM52.1 6.4h1v1h-1zM25.8 5.0h1v1h-1zM44.1 0.1h1v1h-1zM3.2 6.2h1v1h-1zM59.8 10.6h1v1h-1zM5.2 10.4h1v1h-1zM39.6 10.6h1v1h-1zM21.4 9.9h1v1h-1zM20.7 6.6h1v1h-1zM21.0 9.6h1v1h-1zM37.7 4.3h1v1h-1zM64.1 11.0h1v1h-1zM19.2 4.4h1v1h-1zM61.0 0.3h1v1h-1zM38.4 2.5h1v1h-1zM50.2 9.1h1v1h-1zM46.7 5.4h1v1h-1zM46.0 1.7h1v1h-1zM31.9 10.8h1v1h-1zM61.6 10.4h1v1h-1zM46.8 1.8h1v1h-1zM57.7 2.4h1v1h-1zM48.2 2.5h1v1h-1zM57.9 7.5h1v1h-1zM47.7 10.5h1v1h-1zM17.3 2.1h1v1h-1zM1.4 10.9h1v1h-1zM67.6 5.4h1v1h-1zM57.3 10.6h1v1h-1zM14.4 9.0h1v1h-1zM21.4 3.7h1v1h-1zM22.7 0.2h1v1h-1zM0.5 9.6h1v1h-1zM49.0 10.1h1v1h-1zM59.0 0.3h1v1h-1zM5.9 6.7h1v1h-1zM67.2 4.4h1v1h-1zM15.6 6.8h1v1h-1zM44.3 6.0h1v1h-1zM19.2 3.6h1v1h-1zM46.4 6.6h1v1h-1z"/><path fill="#402010" d="M62.4 6.9h1v1h-1zM4.1 10.5h1v1h-1zM61.3 0.9h1v1h-1zM63.4 4.8h1v1h-1zM22.7 2.1h1v1h-1zM3.9 0.2h1v1h-1zM24.1 8.4h1v1h-1zM25.9 3.3h1v1h-1zM36.6 11.0h1v1h-1zM42.9 5.8h1v1h-1zM59.2 9.9h1v1h-1zM40.9 1.6h1v1h-1zM38.2 1.3h1v1h-1zM59.3 1.4h1v1h-1zM4.6 10.1h1v1h-1zM10.6 8.1h1v1h-1zM30.1 3.7h1v1h-1zM33.3 2.1h1v1h-1zM16.2 2.7h1v1h-1zM20.1 2.0h1v1h-1zM49.2 0.0h1v1h-1zM38.6 5.2h1v1h-1zM22.0 5.1h1v1h-1zM9.1 5.5h1v1h-1zM42.6 10.6h1v1h-1zM26.8 9.6h1v1h-1zM67.5 0.4h1v1h-1zM60.1 8.6h1v1h-1zM20.5 3.4h1v1h-1zM36.6 6.5h1v1h-1zM38.0 4.0h1v1h-1zM42.5 1.3h1v1h-1z"/></svg>
<div class="t" style="left:1008px;top:212px;font-size:12px;line-height:14px;font-weight:normal;color:#000;transform:scaleX(0.948);">_00</div>
<div style="position:absolute;left:931.6px;top:237px;width:3px;height:3px;border-radius:50%;background:#000"></div>
<div style="position:absolute;left:935.6px;top:237px;width:3px;height:3px;border-radius:50%;background:#000"></div>
<div style="position:absolute;left:939.6px;top:237px;width:3px;height:3px;border-radius:50%;background:#000"></div>
<div style="position:absolute;left:943.6px;top:237px;width:3px;height:3px;border-radius:50%;background:#000"></div>
<div style="position:absolute;left:947.6px;top:237px;width:3px;height:3px;border-radius:50%;background:#000"></div>
<div style="position:absolute;left:951.6px;top:237px;width:3px;height:3px;border-radius:50%;background:#000"></div>
<div style="position:absolute;left:955.6px;top:237px;width:3px;height:3px;border-radius:50%;background:#000"></div>
<div style="position:absolute;left:959.6px;top:237px;width:3px;height:3px;border-radius:50%;background:#000"></div>
<div style="position:absolute;left:963.6px;top:237px;width:3px;height:3px;border-radius:50%;background:#000"></div>
<div style="position:absolute;left:967.6px;top:237px;width:3px;height:3px;border-radius:50%;background:#000"></div>
<div class="t" style="left:346.8px;top:271px;font-size:12px;line-height:14px;font-weight:normal;color:#000;transform:scaleX(0.948);">Line Mode</div>
<div style="position:absolute;left:929px;top:270px;width:97px;height:14px;border:1px solid #a9a9a9;border-radius:2px;background:#fff"></div>
<div class="t" style="left:934px;top:271px;font-size:12px;line-height:14px;font-weight:normal;color:#000;transform:scaleX(0.948);">Generic</div>
<svg style="position:absolute;left:1014.5px;top:275px" width="7" height="6" viewBox="0 0 7 6"><path d="M0.3 0.2H6.5L3.4 5.4Z" fill="#000"/></svg>
<div class="t" style="left:346.8px;top:289px;font-size:12px;line-height:14px;font-weight:normal;color:#000;transform:scaleX(0.948);">Call Waiting</div>
<div style="position:absolute;left:929px;top:288px;width:66px;height:14px;border:1px solid #5b8ed6;border-radius:2px;background:#fff;box-shadow:0 0 1px 1px rgba(91,142,214,0.45)"></div>
<div class="t" style="left:934px;top:289px;font-size:12px;line-height:14px;font-weight:normal;color:#000;transform:scaleX(0.948);">Global</div>
<svg style="position:absolute;left:984px;top:293px" width="7" height="6" viewBox="0 0 7 6"><path d="M0.3 0.2H6.5L3.4 5.4Z" fill="#000"/></svg>
<div style="position:absolute;left:347px;top:320px;width:580px;height:12px;background:#c5e0f7"></div>
<div class="t" style="left:348px;top:319px;font-size:12px;line-height:14px;font-weight:bold;color:#000066;transform:scaleX(0.936);">Basic SIP Network Settings</div>
<div class="t" style="left:346.8px;top:336px;font-size:12px;line-height:14px;font-weight:normal;color:#000;transform:scaleX(0.948);">Proxy Server</div>
<div style="position:absolute;left:929px;top:334px;width:147px;height:16px;border:1px solid #a9a9a9;background:#fff"></div>
<div class="t" style="left:931px;top:336px;font-size:12px;line-height:14px;font-weight:normal;color:#000;transform:scaleX(0.948);">sip.solucon.com</div>
<div class="t" style="left:346.8px;top:356px;font-size:12px;line-height:14px;font-weight:normal;color:#000;transform:scaleX(0.948);">Proxy Port</div>
<div style="position:absolute;left:929px;top:354px;width:147px;height:16px;border:1px solid #a9a9a9;background:#fff"></div>
<div class="t" style="left:931px;top:356px;font-size:12px;line-height:14px;font-weight:normal;color:#000;transform:scaleX(0.948);">5060</div>
<div class="t" style="left:346.8px;top:376px;font-size:12px;line-height:14px;font-weight:normal;color:#000;transform:scaleX(0.948);">Backup Proxy Server</div>
<div style="position:absolute;left:929px;top:374px;width:147px;height:16px;border:1px solid #a9a9a9;background:#fff"></div>
<div class="t" style="left:931px;top:376px;font-size:12px;line-height:14px;font-weight:normal;color:#000;transform:scaleX(0.948);">0.0.0.0</div>
<div class="t" style="left:346.8px;top:396px;font-size:12px;line-height:14px;font-weight:normal;color:#000;transform:scaleX(0.948);">Backup Proxy Port</div>
<div style="position:absolute;left:929px;top:394px;width:147px;height:16px;border:1px solid #a9a9a9;background:#fff"></div>
<div class="t" style="left:931px;top:396px;font-size:12px;line-height:14px;font-weight:normal;color:#000;transform:scaleX(0.948);">0</div>
<div class="t" style="left:346.8px;top:416px;font-size:12px;line-height:14px;font-weight:normal;color:#000;transform:scaleX(0.948);">Outbound Proxy Server</div>
<div style="position:absolute;left:929px;top:414px;width:147px;height:16px;border:1px solid #a9a9a9;background:#fff"></div>
<div class="t" style="left:931px;top:416px;font-size:12px;line-height:14px;font-weight:normal;color:#000;transform:scaleX(0.948);">sip.solucon.com</div>
<div class="t" style="left:346.8px;top:436px;font-size:12px;line-height:14px;font-weight:normal;color:#000;transform:scaleX(0.948);">Outbound Proxy Port</div>
<div style="position:absolute;left:929px;top:434px;width:147px;height:16px;border:1px solid #a9a9a9;background:#fff"></div>
<div class="t" style="left:931px;top:436px;font-size:12px;line-height:14px;font-weight:normal;color:#000;transform:scaleX(0.948);">5060</div>
<div class="t" style="left:346.8px;top:456px;font-size:12px;line-height:14px;font-weight:normal;color:#000;transform:scaleX(0.948);">Backup Outbound Proxy Server</div>
<div style="position:absolute;left:929px;top:454px;width:147px;height:16px;border:1px solid #a9a9a9;background:#fff"></div>
<div class="t" style="left:931px;top:456px;font-size:12px;line-height:14px;font-weight:normal;color:#000;transform:scaleX(0.948);">0.0.0.0</div>
<div class="t" style="left:346.8px;top:476px;font-size:12px;line-height:14px;font-weight:normal;color:#000;transform:scaleX(0.948);">Backup Outbound Proxy Port</div>
<div style="position:absolute;left:929px;top:474px;width:147px;height:16px;border:1px solid #a9a9a9;background:#fff"></div>
<div class="t" style="left:931px;top:476px;font-size:12px;line-height:14px;font-weight:normal;color:#000;transform:scaleX(0.948);">0</div>
<div class="t" style="left:346.8px;top:496px;font-size:12px;line-height:14px;font-weight:normal;color:#000;transform:scaleX(0.948);">Registrar Server</div>
<div style="position:absolute;left:929px;top:494px;width:147px;height:16px;border:1px solid #a9a9a9;background:#fff"></div>
<div class="t" style="left:931px;top:496px;font-size:12px;line-height:14px;font-weight:normal;color:#000;transform:scaleX(0.948);">sip.solucon.com</div>
<div class="t" style="left:346.8px;top:516px;font-size:12px;line-height:14px;font-weight:normal;color:#000;transform:scaleX(0.948);">Registrar Port</div>
<div style="position:absolute;left:929px;top:514px;width:147px;height:16px;border:1px solid #a9a9a9;background:#fff"></div>
<div class="t" style="left:931px;top:516px;font-size:12px;line-height:14px;font-weight:normal;color:#000;transform:scaleX(0.948);">5060</div>
<div class="t" style="left:346.8px;top:536px;font-size:12px;line-height:14px;font-weight:normal;color:#000;transform:scaleX(0.948);">Backup Registrar Server</div>
<div style="position:absolute;left:929px;top:534px;width:147px;height:16px;border:1px solid #a9a9a9;background:#fff"></div>
<div class="t" style="left:931px;top:536px;font-size:12px;line-height:14px;font-weight:normal;color:#000;transform:scaleX(0.948);">0.0.0.0</div>
<div class="t" style="left:346.8px;top:556px;font-size:12px;line-height:14px;font-weight:normal;color:#000;transform:scaleX(0.948);">Backup Registrar Port</div>
<div style="position:absolute;left:929px;top:554px;width:147px;height:16px;border:1px solid #a9a9a9;background:#fff"></div>
<div class="t" style="left:931px;top:556px;font-size:12px;line-height:14px;font-weight:normal;color:#000;transform:scaleX(0.948);">0</div>
<div class="t" style="left:346.8px;top:576px;font-size:12px;line-height:14px;font-weight:normal;color:#000;transform:scaleX(0.948);">Registration Period</div>
<div style="position:absolute;left:929px;top:574px;width:147px;height:16px;border:1px solid #a9a9a9;background:#fff"></div>
<div class="t" style="left:931px;top:576px;font-size:12px;line-height:14px;font-weight:normal;color:#000;transform:scaleX(0.948);">0</div>
<div class="t" style="left:346.8px;top:596px;font-size:12px;line-height:14px;font-weight:normal;color:#000;transform:scaleX(0.948);">Conference Server URI</div>
<div style="position:absolute;left:929px;top:594px;width:147px;height:16px;border:1px solid #a9a9a9;background:#fff"></div>
<div style="position:absolute;left:347px;top:628px;width:580px;height:12px;background:#c5e0f7"></div>
<div class="t" style="left:348px;top:627px;font-size:12px;line-height:14px;font-weight:bold;color:#000066;transform:scaleX(0.936);">Advanced SIP Settings</div>
<div class="t" style="left:346.8px;top:644px;font-size:12px;line-height:14px;font-weight:normal;color:#000;transform:scaleX(0.948);">AS-Feature-Event Subscription</div>
<div style="position:absolute;left:933px;top:645px;width:10px;height:10px;border:1px solid #a6a6a6;border-radius:2px;background:linear-gradient(#f4f4f4,#d8d8d8)"></div>
<div class="t" style="left:949px;top:647px;font-size:12px;line-height:14px;font-weight:normal;color:#000;transform:scaleX(0.948);">Enabled</div>
<div class="t" style="left:346.8px;top:665px;font-size:12px;line-height:14px;font-weight:normal;color:#000;transform:scaleX(0.948);">Park Pickup Config</div>
<div style="position:absolute;left:929px;top:663px;width:147px;height:16px;border:1px solid #a9a9a9;background:#fff"></div>
<div style="position:absolute;left:347px;top:697px;width:580px;height:12px;background:#c5e0f7"></div>
<div class="t" style="left:348px;top:696px;font-size:12px;line-height:14px;font-weight:bold;color:#000066;transform:scaleX(0.936);">RTP Settings</div>
<div class="t" style="left:346.8px;top:712px;font-size:12px;line-height:14px;font-weight:normal;color:#000;transform:scaleX(0.948);">DTMF Method</div>
<div style="position:absolute;left:929px;top:711px;width:71px;height:14px;border:1px solid #a9a9a9;border-radius:2px;background:#fff"></div>
<div class="t" style="left:934px;top:712px;font-size:12px;line-height:14px;font-weight:normal;color:#000;transform:scaleX(0.948);">RTP</div>
<svg style="position:absolute;left:989px;top:716px" width="7" height="6" viewBox="0 0 7 6"><path d="M0.3 0.2H6.5L3.4 5.4Z" fill="#000"/></svg>
<div class="t" style="left:346.8px;top:730px;font-size:12px;line-height:14px;font-weight:normal;color:#000;transform:scaleX(0.948);">RTP Encryption</div>
<div style="position:absolute;left:929px;top:729px;width:103px;height:14px;border:1px solid #a9a9a9;border-radius:2px;background:#fff"></div>
<div class="t" style="left:934px;top:730px;font-size:12px;line-height:14px;font-weight:normal;color:#000;transform:scaleX(0.948);">Global</div>
<svg style="position:absolute;left:1021px;top:734px" width="7" height="6" viewBox="0 0 7 6"><path d="M0.3 0.2H6.5L3.4 5.4Z" fill="#000"/></svg>
<div style="position:absolute;left:347px;top:747px;width:580px;height:12px;background:#c5e0f7"></div>
<div class="t" style="left:348px;top:746px;font-size:12px;line-height:14px;font-weight:bold;color:#000066;transform:scaleX(0.936);">Autodial Settings</div>
<div class="t" style="left:346.8px;top:763px;font-size:12px;line-height:14px;font-weight:normal;color:#000;transform:scaleX(0.948);">Use Global Settings</div>
<div style="position:absolute;left:933px;top:764px;width:10px;height:10px;border:1px solid #a6a6a6;border-radius:2px;background:linear-gradient(#f4f4f4,#d8d8d8)"></div>
<svg style="position:absolute;left:933px;top:764px" width="12" height="12" viewBox="0 0 12 12"><path d="M2.3 6.3L5 9L9.8 2.8" stroke="#444" stroke-width="2" fill="none"/></svg>
<div class="t" style="left:949px;top:766px;font-size:12px;line-height:14px;font-weight:normal;color:#000;transform:scaleX(0.948);">Enabled</div>
<div class="t" style="left:346.8px;top:784px;font-size:12px;line-height:14px;font-weight:normal;color:#000;transform:scaleX(0.948);">Autodial Number</div>
<div style="position:absolute;left:929px;top:782px;width:147px;height:16px;border:1px solid #a9a9a9;background:#ebebe4"></div>
<div class="t" style="left:931px;top:784px;font-size:12px;line-height:14px;font-weight:normal;color:#6d6d6d;transform:scaleX(0.948);">-1</div>
<div class="t" style="left:346.8px;top:804px;font-size:12px;line-height:14px;font-weight:normal;color:#000;transform:scaleX(0.948);">Autodial Timeout</div>
<div style="position:absolute;left:929px;top:802px;width:147px;height:16px;border:1px solid #a9a9a9;background:#ebebe4"></div>
<div class="t" style="left:931px;top:804px;font-size:12px;line-height:14px;font-weight:normal;color:#6d6d6d;transform:scaleX(0.948);">0</div>
<div style="position:absolute;left:929px;top:303px;width:66px;height:46px;border:1px solid #7f9fd6;background:#fff"></div>
<div style="position:absolute;left:930px;top:305px;width:66px;height:14.5px;background:#1e90ff"></div>
<div class="t" style="left:934px;top:304px;font-size:12px;line-height:14px;font-weight:normal;color:#fff;transform:scaleX(0.948);">Global</div>
<div class="t" style="left:934px;top:319px;font-size:12px;line-height:14px;font-weight:normal;color:#000;transform:scaleX(0.948);">Disabled</div>
<div class="t" style="left:934px;top:334px;font-size:12px;line-height:14px;font-weight:normal;color:#000;transform:scaleX(0.948);">Enabled</div>
<div style="position:absolute;left:345px;top:852px;width:103px;height:20px;border:1px solid #a0a0a0;border-radius:2px;background:linear-gradient(#f8f8f8,#dddddd)"></div>
<div class="t" style="left:353.3px;top:855px;font-size:14.3px;line-height:16px;font-weight:normal;color:#000;transform:scaleX(1.017);">Save Settings</div>
<div style="position:absolute;left:79px;top:286px;width:39px;height:39px;border-radius:50%;background:#73a693;box-shadow:1px 1px 1.5px rgba(0,0,0,0.25)"></div>
<div class="t" style="left:93.8px;top:293px;font-size:22px;line-height:24px;font-weight:bold;color:#fff;transform:scaleX(0.925);">4</div>
<div style="position:absolute;left:299px;top:278px;width:39px;height:39px;border-radius:50%;background:#73a693;box-shadow:1px 1px 1.5px rgba(0,0,0,0.25)"></div>
<div class="t" style="left:313.4px;top:286px;font-size:22px;line-height:24px;font-weight:bold;color:#fff;transform:scaleX(0.925);">5</div>
<div style="position:absolute;left:300px;top:844px;width:39px;height:39px;border-radius:50%;background:#73a693;box-shadow:1px 1px 1.5px rgba(0,0,0,0.25)"></div>
<div class="t" style="left:315.2px;top:852px;font-size:22px;line-height:24px;font-weight:bold;color:#fff;transform:scaleX(0.925);">6</div>
</body></html>
